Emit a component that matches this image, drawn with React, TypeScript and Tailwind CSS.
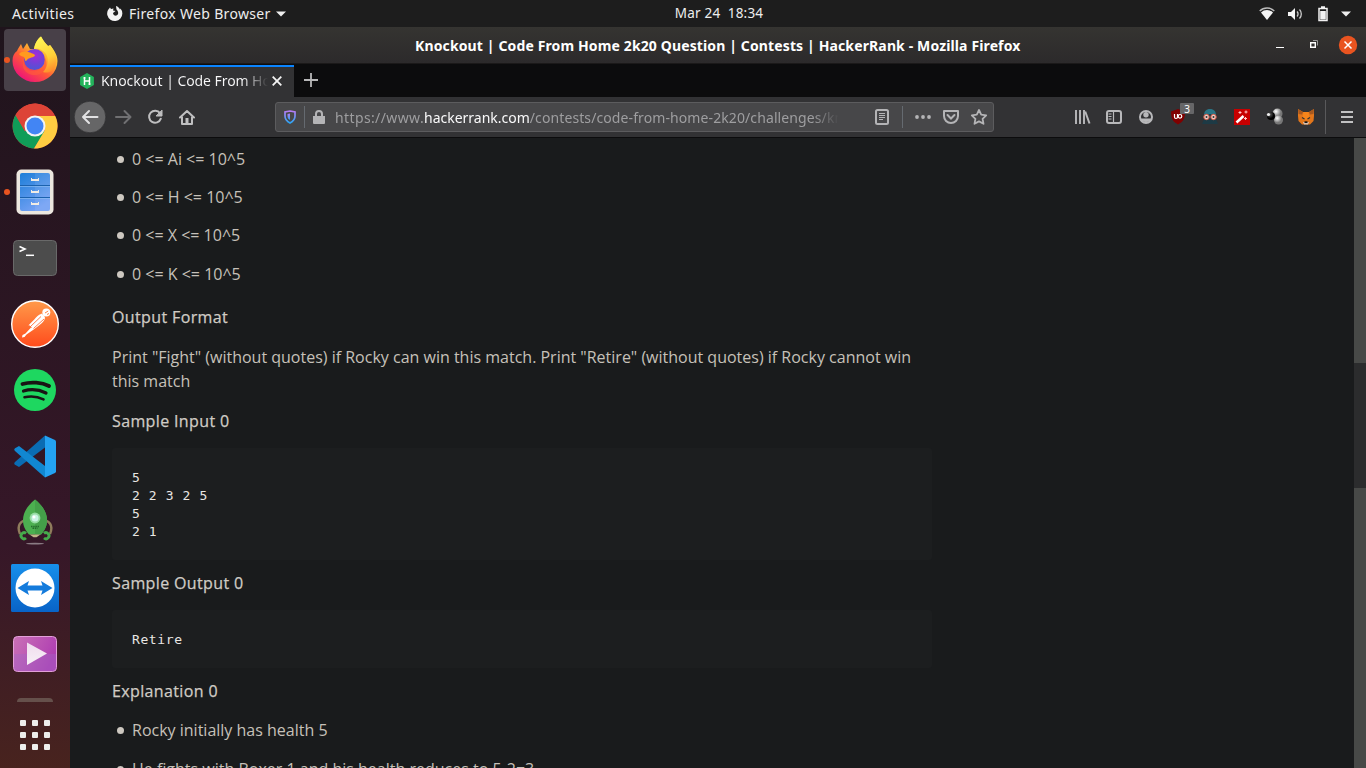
import React from "react";

const UI = "font-['Noto_Sans',sans-serif]";

function Firefox() {
  return (
    <svg width="46" height="48" viewBox="0 0 46 48">
      <defs>
        <linearGradient id="fxBody" x1="0.85" y1="0.1" x2="0.25" y2="0.95">
          <stop offset="0" stopColor="#fff24a" />
          <stop offset="0.35" stopColor="#ffb02e" />
          <stop offset="0.62" stopColor="#ff5a36" />
          <stop offset="1" stopColor="#ee1577" />
        </linearGradient>
        <linearGradient id="fxFlame" x1="0.4" y1="0" x2="0.7" y2="1">
          <stop offset="0" stopColor="#fff655" />
          <stop offset="0.6" stopColor="#ffcf38" />
          <stop offset="1" stopColor="#ff8a2b" />
        </linearGradient>
        <radialGradient id="fxGlobe" cx="0.55" cy="0.3" r="0.75">
          <stop offset="0" stopColor="#a52ad8" />
          <stop offset="0.5" stopColor="#7340d6" />
          <stop offset="1" stopColor="#4a57d4" />
        </radialGradient>
      </defs>
      <g transform="translate(0 -1)">
        <path d="M5 16 C6 13 8 11 9 9 L11 14 L15 8 L18 14 L22 14 C23 9 25 4 29 1.500 C31 5 33 8 36 11 L38 10 C41 14 45.500 19 45.500 26 A22.500 21 0 0 1 .5 26 C.5 21 2 18 5 16Z" fill="url(#fxBody)" />
        <path d="M22 14 C23 8 26 4 29 1.500 C31 6 35 10 37 12 L38 10 C43 16 45 23 44 28 C43 36 36 39 31 37 C37 31 38 21 31 16 C28 13.500 25 13.500 22 14Z" fill="url(#fxFlame)" />
        <circle cx="22.500" cy="24.500" r="10.500" fill="url(#fxGlobe)" />
        <path d="M7 19 C10 16 14 16 18 17.500 C20 18.500 23 19 23 20.500 C22 23 17 22 15 25 C13 28 13 24 12 22 C10 21 8 21 7 19Z" fill="#ff9a1f" />
        <path d="M12 25 C11 33 18 37 24 36 C31 35 34 28 32 21 C37 28 34 39 24 40 C15 41 8 33 12 25Z" fill="#ff5a3a" opacity=".65" />
      </g>
    </svg>
  );
}

function Chrome() {
  return (
    <svg width="46" height="46" viewBox="0 0 46 46">
      <circle cx="23" cy="23" r="22.500" fill="#dd4437" />
      <path d="M3.500 12 A22.500 22.500 0 0 0 22 45.500 L33 28 L13 28Z" fill="#109d58" />
      <path d="M23 13 L43.200 13 A22.500 22.500 0 0 1 22 45.500 L33 27Z" fill="#ffcd42" />
      <path d="M3.500 12 L13 28.500 L23 13 L43.200 13 A22.500 22.500 0 0 0 3.500 12Z" fill="#dd4437" />
      <circle cx="23" cy="23" r="10.500" fill="#f3f3f3" />
      <circle cx="23" cy="23" r="8.500" fill="#4285f4" />
    </svg>
  );
}

function Files() {
  return (
    <svg width="38" height="46" viewBox="0 0 38 46">
      <defs>
        <linearGradient id="fl" x1="0" y1="0" x2="0.5" y2="1">
          <stop offset="0" stopColor="#1c7ed8" />
          <stop offset="1" stopColor="#74a1f4" />
        </linearGradient>
      </defs>
      <rect x=".5" y=".5" width="37" height="45" rx="5" fill="#ece7df" />
      <rect x="4" y="4" width="30" height="38" rx="2" fill="url(#fl)" />
      <path d="M19 4h15v38H19z" fill="#fff" opacity=".08" />
      <path d="M4 16.500h30M4 28.500h30" stroke="#1b62ae" />
      <path d="M4 17.500h30M4 29.500h30" stroke="#91c1f5" opacity=".6" />
      <path d="M15 9h1v1h6V9h1v3h-8zM15 21h1v1h6v-1h1v3h-8zM15 33h1v1h6v-1h1v3h-8z" fill="#f1ece4" />
    </svg>
  );
}

function Terminal() {
  return (
    <svg width="44" height="36" viewBox="0 0 44 36">
      <rect x=".5" y=".5" width="43" height="35" rx="4" fill="#4c4c4c" stroke="#696969" />
      <path d="M6.500 6.500l5.500 2.500-5.500 2.500" stroke="#fff" strokeWidth="1.600" fill="none" />
      <path d="M13 15.300h8" stroke="#fff" strokeWidth="1.500" />
    </svg>
  );
}

function Postman() {
  return (
    <svg width="48" height="48" viewBox="0 0 48 48">
      <defs>
        <linearGradient id="pm" x1="0" y1="0" x2="0" y2="1">
          <stop offset="0" stopColor="#ff9a4a" />
          <stop offset="1" stopColor="#ff4b1c" />
        </linearGradient>
      </defs>
      <circle cx="24" cy="24" r="23.300" fill="url(#pm)" stroke="#fff" strokeWidth="1.400" />
      <circle cx="35.300" cy="12.500" r="4" fill="#fff" />
      <path d="M34 13l3.200-2M36 14.500l2-1" stroke="#ff8344" />
      <path d="M30 13.500c2 .8 3.800 2.500 4 4.500-.5 3-3 5-6 7.500l-6 4.500-6.500 4.500-2 2.500-2.500.5.500-2.500 3-1.500 6-6.500-3-1.800 6-6c2-2.500 4-4.500 6.500-5.200z" fill="#fff" />
      <path d="M30 16.500l-10.500 10M33 19l-10.500 9.500M18.500 25.500l2 2" stroke="#ff713a" strokeWidth=".9" />
    </svg>
  );
}

function Spotify() {
  return (
    <svg width="42" height="42" viewBox="0 0 42 42">
      <circle cx="21" cy="21" r="21" fill="#1ed760" />
      <path d="M8.500 15 C17 12.500 28 13.300 35 17" stroke="#191414" strokeWidth="3.800" strokeLinecap="round" fill="none" />
      <path d="M9.500 22 C17 19.800 25 20.500 32 24" stroke="#191414" strokeWidth="3.200" strokeLinecap="round" fill="none" />
      <path d="M10.500 28.300 C17 26.800 23 27.200 29.500 30.400" stroke="#191414" strokeWidth="2.600" strokeLinecap="round" fill="none" />
    </svg>
  );
}

function Code() {
  return (
    <svg width="42" height="43" viewBox="0 0 42 43">
      <path d="M31 .5v12L5 32 1 29.800Q-.5 28.500 1 27z" fill="#0a6cb3" />
      <path d="M31 42.500V31L5 11 1 13.200Q-.5 14.500 1 16z" fill="#1187d1" />
      <path d="M31 .5l10 4.600q1 .5 1 1.600v29.600q0 1.100-1 1.600l-10 4.600z" fill="#24a2f2" />
    </svg>
  );
}

function Rocket() {
  return (
    <svg width="36" height="46" viewBox="0 0 36 46">
      <path d="M7 21.500C1.500 24 .500 29 3 35M29 21.500c5.500 2.500 6.500 7.500 4 13.500" stroke="#8f7c5c" strokeWidth="2.400" fill="none" />
      <path d="M18 .5C26 7 30 14 30 21c0 7-3 11-6 14.500H12C9 32 6 28 6 21 6 14 10 7 18 .5z" fill="#4caf50" />
      <path d="M18 .5C26 7 30 14 30 21c0 7-3 11-6 14.500h-6z" fill="#449f49" />
      <path d="M12.500 35.500h11l-4 2.700h-3z" fill="#c3b688" />
      <circle cx="18" cy="19" r="5.400" fill="#95dba2" />
      <circle cx="18" cy="19" r="3.500" fill="#caf3e5" />
      <circle cx="17" cy="18" r="1.500" fill="#fff" />
      <path d="M14 27.500h8M15.500 29.300h5" stroke="#246c2c" strokeWidth="1.500" strokeDasharray="1.500 .7" />
      <path d="M9 34.500a3 3 0 1 0 0 4.500M27 34.500a3 3 0 1 1 0 4.500" stroke="#45aa4b" strokeWidth="2.800" fill="none" />
      <ellipse cx="18" cy="44.700" rx="9" ry=".9" fill="#8a7b84" />
    </svg>
  );
}

function TeamViewer() {
  return (
    <svg width="48" height="48" viewBox="0 0 48 48">
      <defs>
        <linearGradient id="tv" x1="0" y1="0" x2="0" y2="1">
          <stop offset="0" stopColor="#178fea" />
          <stop offset="1" stopColor="#0863c8" />
        </linearGradient>
      </defs>
      <rect width="48" height="48" rx="1.500" fill="url(#tv)" />
      <circle cx="24" cy="24" r="19.500" fill="#fff" />
      <path d="M6.500 24l11.500-7-1.500 4.500h15L30 17l11.500 7L30 31l1.500-4.500h-15L18 31z" fill="#147bdc" />
    </svg>
  );
}

function Video() {
  return (
    <svg width="44" height="36" viewBox="0 0 44 36">
      <defs>
        <linearGradient id="vd" x1="0" y1="0" x2="1" y2="0.4">
          <stop offset="0" stopColor="#ca72b6" />
          <stop offset="1" stopColor="#b03fb2" />
        </linearGradient>
        <linearGradient id="vp" x1="0" y1="0" x2="0" y2="1">
          <stop offset="0" stopColor="#f0dcee" />
          <stop offset="1" stopColor="#f7f0f6" />
        </linearGradient>
      </defs>
      <rect x=".5" y=".5" width="43" height="35" rx="4" fill="url(#vd)" stroke="#e29fd8" />
      <path d="M1 18h42v14a3 3 0 0 1-3 3H4a3 3 0 0 1-3-3z" fill="#9d6ac8" opacity=".35" />
      <path d="M14 6.500l20 11-20 11.500z" fill="url(#vp)" />
    </svg>
  );
}

const dock = [Firefox, Chrome, Files, Terminal, Postman, Spotify, Code, Rocket, TeamViewer, Video];

function Dock() {
  return (
    <aside className="relative flex w-[70px] shrink-0 flex-col bg-linear-to-b from-[#1f141c] via-[#361728] via-70% to-[#48231e]">
      {dock.map((Icon, i) => (
        <div key={i} className="flex h-[66px] shrink-0 items-center justify-center">
          <div className={i === 0 ? "flex size-[62px] items-center justify-center rounded bg-[#484048]" : "flex size-[62px] items-center justify-center"}>
            <Icon />
          </div>
          {(i === 0 || i === 2) && <span className={i === 0 ? "absolute left-1 top-[30px] size-[6px] rounded-full bg-[#e95420]" : "absolute left-1 top-[162px] size-[6px] rounded-full bg-[#e95420]"} />}
        </div>
      ))}
      <div className="mx-auto mt-[11px] h-1 w-9 shrink-0 rounded-t bg-[#65504b]" />
      <div className="mx-auto mt-[18px] grid grid-cols-3 gap-[6px]">
        {Array.from({ length: 9 }, (_, i) => <span key={i} className="size-[6px] rounded-[1px] bg-[#eeeeec]" />)}
      </div>
    </aside>
  );
}

function TopBar() {
  return (
    <header className={`${UI} flex h-[27px] shrink-0 items-center bg-[#1d1d1d] text-[14px] text-[#ededed]`}>
      <div className="flex w-[546px] items-center pl-3">
        <span className="w-[95px] whitespace-nowrap tracking-[0.4px]">Activities</span>
        <svg width="16" height="16" viewBox="0 0 16 16">
          <path d="M1 4L3 1.500 4 3 6.500 2.500 6 4.500 8.500 5 6 7C6 9 8 10 9.500 9.500 12 8.500 11.500 5.500 9.500 3.500L9 0c2 .5 3.500 2 4 3.500l.5-1A7.600 7.600 0 1 1 1 4z" fill="#f2f2f2" />
        </svg>
        <span className="ml-[6px] w-[142px] whitespace-nowrap tracking-[0.33px]">Firefox Web Browser</span>
        <svg className="ml-[5px]" width="10" height="6" viewBox="0 0 10 6"><path d="M0 .5h10L5 5.500z" fill="#eee" /></svg>
      </div>
      <div className="flex w-[346px] justify-center whitespace-pre text-[13.500px] tracking-[0.2px]">Mar 24  18:34</div>
      <div className="flex flex-1 items-center pl-[367px]">
        <svg width="16" height="14" viewBox="0 0 16 14">
          <path d="M.7 4a10.500 10.500 0 0 1 14.600 0" stroke="#bbb" strokeWidth="1.400" fill="none" />
          <path d="M2 5.500a8.500 8.500 0 0 1 12 0L8 13z" fill="#f4f4f4" />
        </svg>
        <svg className="ml-[13px]" width="16" height="14" viewBox="0 0 16 14">
          <path d="M0 5h3l4-4v12L3 9H0z" fill="#f4f4f4" />
          <path d="M9 4.500a3.500 3.500 0 0 1 0 5M11.500 2.500a6.500 6.500 0 0 1 0 9" stroke="#ccc" strokeWidth="1.300" fill="none" />
        </svg>
        <svg className="ml-[14px]" width="10" height="16" viewBox="0 0 10 16">
          <path d="M1 2.500h8v12H1zM3 1h4" stroke="#f2f2f2" strokeWidth="1.500" fill="none" />
          <path d="M2.200 5h5.600v8.500H2.200z" fill="#f2f2f2" />
        </svg>
        <svg className="ml-[13px]" width="10" height="6" viewBox="0 0 10 6"><path d="M0 .5h10L5 5.500z" fill="#eee" /></svg>
      </div>
    </header>
  );
}

function TitleBar() {
  return (
    <div className={`${UI} flex h-[37px] shrink-0 items-center border-b border-[#1b1919] bg-linear-to-b from-[#353431] to-[#2c2a2b] text-white`}>
      <div className="w-[345px]" />
      <h1 className="w-[606px] whitespace-nowrap text-[14px] font-bold tracking-[0.13px]">Knockout | Code From Home 2k20 Question | Contests | HackerRank - Mozilla Firefox</h1>
      <svg className="ml-[255px]" width="90" height="20" viewBox="0 0 90 20">
        <path d="M0 12.500h8" stroke="#fff" />
        <path d="M37 5.500h4.500v5" stroke="#999" fill="none" />
        <path d="M34.700 7.700h4.600v4.600h-4.600z" stroke="#fff" strokeWidth="1.400" fill="none" />
        <circle cx="72" cy="10" r="9.200" fill="#e95420" />
        <path d="M68.500 6.500l7 7M75.500 6.500l-7 7" stroke="#fff" strokeWidth="1.500" />
      </svg>
    </div>
  );
}

function TabBar() {
  return (
    <div className={`${UI} flex h-[33px] shrink-0 bg-[#0c0c0d]`}>
      <div className="mt-px flex w-[224px] items-center border-t-2 border-[#0a84ff] bg-[#323234] pb-[2px] pl-[9px]">
        <svg width="16" height="16" viewBox="0 0 16 16">
          <path d="M8 0l6.900 4v8L8 16l-6.900-4V4z" fill="#23b35b" />
          <path d="M5.500 4v8M10.500 4v8M5.500 8h5M4.500 5h2M9.500 11h2" stroke="#fff" strokeWidth="1.500" fill="none" />
        </svg>
        <div className="mb-px ml-[6px] w-[167px] overflow-hidden whitespace-nowrap bg-linear-to-r from-[#f9f9fa] from-85% to-[#f9f9fa00] to-100% bg-clip-text text-[14px] tracking-[-0.07px] text-transparent">
          Knockout | Code From Home
        </div>
        <svg className="ml-[4px]" width="10" height="10" viewBox="0 0 10 10"><path d="M.7.700l8.600 8.600M9.300.700L.7 9.300" stroke="#f4f4f4" strokeWidth="1.800" /></svg>
      </div>
      <svg className="ml-[10px] mt-[9px]" width="14" height="14" viewBox="0 0 14 14"><path d="M7 0v14M0 7h14" stroke="#b8b8b9" strokeWidth="1.800" /></svg>
    </div>
  );
}

function UrlBar() {
  return (
    <div className="ml-[80px] flex h-[30px] w-[719px] shrink-0 items-center rounded-[3px] border border-[#5c5c5e] bg-[#474749] pl-[8px]">
      <svg className="shrink-0" width="12" height="14" viewBox="0 0 12 14">
        <defs><linearGradient id="sh" x1="0" y1="0" x2="0" y2="1"><stop offset="0" stopColor="#b77cf5" /><stop offset="1" stopColor="#2aa6f5" /></linearGradient></defs>
        <path d="M6 1L11 2v4c0 3.500-2 5.500-5 7-3-1.500-5-3.500-5-7V2z" stroke="url(#sh)" strokeWidth="1.700" fill="none" />
        <path d="M6 3.500V10C4.300 9 3.500 8 3.500 6V4z" fill="url(#sh)" />
      </svg>
      <div className="ml-[8px] h-[22px] w-px shrink-0 bg-[#656a70]" />
      <svg className="ml-[8px] shrink-0" width="12" height="14" viewBox="0 0 12 14">
        <path d="M0 6h12v7a1 1 0 0 1-1 1H1a1 1 0 0 1-1-1z" fill="#b4b4b6" />
        <path d="M3 7V4a3 3 0 0 1 6 0v3" stroke="#b4b4b6" strokeWidth="2" fill="none" />
      </svg>
      <div className={`${UI} ml-[10px] w-[506px] shrink-0 overflow-hidden whitespace-nowrap text-[14px] mask-r-from-[478px] mask-r-to-[504px] text-[#9e9ea0]`}>
        <span className="tracking-[0.38px]">https://www.</span><span className="tracking-[-0.01px] text-[#f9f9fa]">hackerrank.com</span><span className="tracking-[0.1px]">/contests/code-from-home-2k20/challenges/knockout</span>
      </div>
      <svg className="ml-[34px] shrink-0" width="118" height="22" viewBox="0 0 118 22">
        <rect x="1" y="4" width="12" height="14" rx="1.500" stroke="#b4b4b6" strokeWidth="2" fill="none" />
        <path d="M4 7.500h6M4 9.500h6M4 11.500h6M4 13.500h4" stroke="#b4b4b6" />
        <path d="M27.500 0v22" stroke="#656a70" />
        <circle cx="42" cy="11" r="1.900" fill="#b4b4b6" /><circle cx="48" cy="11" r="1.900" fill="#b4b4b6" /><circle cx="54" cy="11" r="1.900" fill="#b4b4b6" />
        <path d="M69 5h14v5a7 7 0 0 1-14 0z" stroke="#b4b4b6" strokeWidth="2" strokeLinejoin="round" fill="none" />
        <path d="M72.500 9l3.500 3.500L79.500 9" stroke="#b4b4b6" strokeWidth="2" fill="none" strokeLinecap="round" />
        <path d="M104 4l2.200 4.600 5 .7-3.600 3.500.9 5-4.500-2.400-4.500 2.400.9-5-3.600-3.500 5-.7z" stroke="#b4b4b6" strokeWidth="1.800" strokeLinejoin="round" fill="none" />
      </svg>
    </div>
  );
}

function Extensions() {
  return (
    <div className="relative ml-[80px]">
      <svg width="286" height="36" viewBox="0 0 286 36">
        <g stroke="#b8b8ba" fill="none" strokeWidth="2">
          <path d="M2 11v14M6 11v14M10 11v14" strokeWidth="1.900" />
          <path d="M11.200 12.500L15.500 24.500" />
          <rect x="33" y="12" width="14" height="12" rx="2" />
          <path d="M39.500 12v12M34.500 15h3M34.500 17.500h3M34.500 20h3" strokeWidth="1.200" />
          <circle cx="72" cy="18" r="6" />
          <path d="M67 20a6 6 0 0 0 10 0z" fill="#b8b8ba" strokeWidth="1" />
        </g>
        <circle cx="72" cy="15.800" r="2.700" fill="#b8b8ba" />
        <path d="M104 10l7 2.500c0 7-1.500 10-7 13-5.500-3-7-6-7-13z" fill="#800000" />
        <path d="M100.500 15v3q0 1.500 1.500 1.500t1.500-1.500v-3" stroke="#fff" strokeWidth="1.200" fill="none" />
        <circle cx="106" cy="17.300" r="1.800" stroke="#fff" strokeWidth="1.200" fill="none" />
        <path d="M128 25l2-5c-1-6 1-9 6-9s7 3 6 9l2 5z" fill="#1d3a45" />
        <path d="M130 17c0-5 2-7 6-7s6 2 6 7l-6-2z" fill="#2a7485" />
        <circle cx="132.500" cy="18" r="2.700" fill="#e9d2cd" stroke="#d95642" /><circle cx="139.500" cy="18" r="2.700" fill="#e9d2cd" stroke="#d95642" />
        <circle cx="132.500" cy="18" r="1" fill="#333" /><circle cx="139.500" cy="18" r="1" fill="#333" />
        <rect x="160" y="10" width="16" height="16" fill="#c80000" />
        <path d="M162.500 23.500l7-6.500" stroke="#fff" strokeWidth="2.500" />
        <path d="M166 12v3M164.500 13.500h3M172 11.500v3M170.500 13h3M171.500 18v3M170 19.500h3" stroke="#ffc6c6" />
        <defs>
          <radialGradient id="bl" cx=".35" cy=".3"><stop offset="0" stopColor="#fff" /><stop offset="1" stopColor="#777" /></radialGradient>
          <radialGradient id="bk" cx=".35" cy=".3"><stop offset="0" stopColor="#666" /><stop offset="1" stopColor="#000" /></radialGradient>
        </defs>
        <circle cx="203.500" cy="14.500" r="5" fill="url(#bl)" /><circle cx="204.500" cy="21" r="4.500" fill="url(#bl)" /><circle cx="197" cy="17" r="4" fill="url(#bk)" /><circle cx="194.500" cy="15.500" r="1.600" fill="#eee" />
        <path d="M224 10l5 3h6l5-3v7l-.5 5-3.500 3.500h-8l-3.500-3.500-.5-5z" fill="#e2761b" />
        <path d="M224 10l5 3-1 2.500-3.500-.5zM240 10l-5 3 1 2.500 3.500-.5z" fill="#a6581f" />
        <path d="M229.500 13h5l1 6-3.500 2-3.500-2z" fill="#f6851b" />
        <path d="M228 18.500l2.500 1.500M236 18.500l-2.500 1.500" stroke="#333" strokeWidth="1.300" />
        <path d="M229 23h6l-1 2.500h-4z" fill="#d7c1b3" /><path d="M230.500 22.300h3v1.700h-3z" fill="#161616" />
        <path d="M251.500 1v34" stroke="#59595b" />
        <path d="M267 13h12M267 18h12M267 23h12" stroke="#c1c1c2" strokeWidth="2" />
      </svg>
      <span className="absolute left-[106px] top-[4px] flex h-[11px] w-[14px] items-center justify-center rounded-[1px] bg-[#666668] font-['Noto_Sans',sans-serif] text-[10px] leading-none text-white">3</span>
    </div>
  );
}

function Toolbar() {
  return (
    <nav className="flex h-[41px] shrink-0 items-center border-b border-[#0c0c0d] bg-[#323234]">
      <svg className="ml-1 shrink-0" width="121" height="34" viewBox="0 0 121 34">
        <circle cx="16" cy="17" r="15.800" fill="#666667" stroke="#232324" strokeWidth=".5" />
        <g fill="none" strokeWidth="2" strokeLinecap="round" strokeLinejoin="round">
          <path d="M23.500 17H9M15 11l-6 6 6 6" stroke="#e2e2e3" />
          <path d="M42 17h14M50.500 11l6 6-6 6" stroke="#707072" />
          <path d="M86 13.200a6 6 0 1 0 .8 5.500" stroke="#bfbfc0" />
          <path d="M88 10.500v5.500h-5.500z" fill="#bfbfc0" stroke="#bfbfc0" strokeWidth="1" />
          <path d="M106 17.500l7-6.500 7 6.500M108 17v7h10v-7" stroke="#bfbfc0" />
        </g>
        <path d="M111.500 18h3v6h-3z" fill="#bfbfc0" />
      </svg>
      <UrlBar />
      <Extensions />
    </nav>
  );
}

function Bullet({ children, className = "" }: { children: React.ReactNode; className?: string }) {
  return (
    <li className={`flex h-6 items-center ${className}`}>
      <span className="ml-[5px] mr-[8px] size-[7px] rounded-full bg-[#cdc8c0]" />
      <span className="whitespace-nowrap">{children}</span>
    </li>
  );
}

function Heading({ children, className }: { children: React.ReactNode; className: string }) {
  return <h2 className={`tracking-[0.37px] text-[#d0ccc5] [-webkit-text-stroke:0.25px_#d0ccc5] ${className}`}>{children}</h2>;
}

function Sample({ children, className }: { children: React.ReactNode; className: string }) {
  return (
    <pre className={`mt-[15px] w-[820px] rounded-[3px] bg-[#1c1e1f] px-5 pt-[21px] font-['DejaVu_Sans_Mono',monospace] text-[13px] leading-[18px] tracking-[0.6px] text-[#e8e6e3] ${className}`}>
      {children}
    </pre>
  );
}

function Page() {
  return (
    <div className="flex min-h-0 flex-1 bg-[#191b1c]">
      <main className="h-[630px] flex-1 overflow-hidden pl-[42px] font-['Open_Sans',sans-serif] text-[16px] leading-6 text-[#c6c1b9]">
        <ul className="mt-[9px] space-y-[14px]">
          <Bullet>0 &lt;= Ai &lt;= 10^5</Bullet>
          <Bullet>0 &lt;= H &lt;= 10^5</Bullet>
          <Bullet>0 &lt;= X &lt;= 10^5</Bullet>
          <Bullet className="mt-[15px]">0 &lt;= K &lt;= 10^5</Bullet>
        </ul>
        <Heading className="mt-[19px]">Output Format</Heading>
        <p className="mt-4 w-[820px]">Print "Fight" (without quotes) if Rocky can win this match. Print "Retire" (without quotes) if Rocky cannot win this match</p>
        <Heading className="mt-4">Sample Input 0</Heading>
        <Sample className="h-[112px]">{"5\n2 2 3 2 5\n5\n2 1"}</Sample>
        <Heading className="mt-[11px]">Sample Output 0</Heading>
        <Sample className="h-[58px]">Retire</Sample>
        <Heading className="mt-[11px]">Explanation 0</Heading>
        <ul className="mt-[15px] space-y-[14px]">
          <Bullet>Rocky initially has health 5</Bullet>
          <Bullet className="pt-[2px]">He fights with Boxer 1 and his health reduces to 5-2=3</Bullet>
        </ul>
      </main>
      <div className="w-3 shrink-0 bg-[#474947] pt-[225px]">
        <div className="h-[125px] bg-[#2b2c2d]" />
      </div>
    </div>
  );
}

export default function App() {
  return (
    <div className="flex h-[768px] w-[1366px] flex-col overflow-hidden bg-[#1d1d1d]">
      <TopBar />
      <div className="flex min-h-0 flex-1">
        <Dock />
        <section className="flex min-w-0 flex-1 flex-col">
          <TitleBar />
          <TabBar />
          <Toolbar />
          <Page />
        </section>
      </div>
    </div>
  );
}
